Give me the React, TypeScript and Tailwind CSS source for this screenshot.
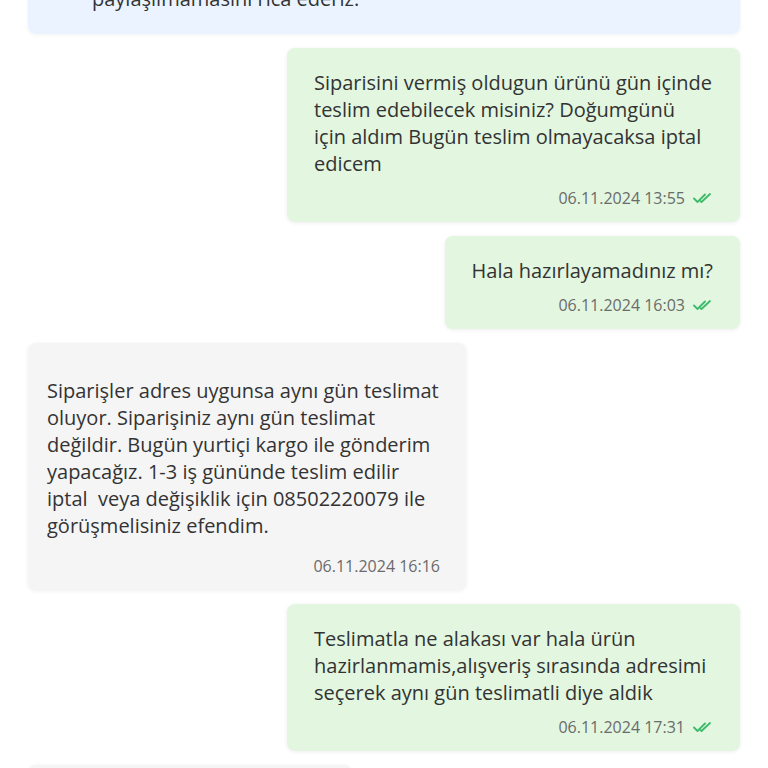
const FONT = { fontFamily: '"Open Sans", "Noto Sans", sans-serif' };

type Msg = {
  from: 'me' | 'them';
  lines: string[];
  time: string;
  width?: string;
};

const MESSAGES: Msg[] = [
  {
    from: 'me',
    width: 'w-[453px]',
    lines: [
      'Siparisini vermiş oldugun ürünü gün içinde',
      'teslim edebilecek misiniz? Doğumgünü',
      'için aldım Bugün teslim olmayacaksa iptal',
      'edicem',
    ],
    time: '06.11.2024 13:55',
  },
  {
    from: 'me',
    lines: ['Hala hazırlayamadınız mı?'],
    time: '06.11.2024 16:03',
  },
  {
    from: 'them',
    width: 'w-[438px]',
    lines: [
      'Siparişler adres uygunsa aynı gün teslimat',
      'oluyor. Siparişiniz aynı gün teslimat',
      'değildir. Bugün yurtiçi kargo ile gönderim',
      'yapacağız. 1-3 iş gününde teslim edilir',
      'iptal\u00a0 veya değişiklik için 08502220079 ile',
      'görüşmelisiniz efendim.',
    ],
    time: '06.11.2024 16:16',
  },
  {
    from: 'me',
    width: 'w-[453px]',
    lines: [
      'Teslimatla ne alakası var hala ürün',
      'hazirlanmamis,alışveriş sırasında adresimi',
      'seçerek aynı gün teslimatli diye aldik',
    ],
    time: '06.11.2024 17:31',
  },
];

function DoubleCheck() {
  return (
    <svg width="20" height="12" viewBox="0 0 20 12" fill="none" className="ml-[8px]">
      <path d="M1 6.5 L4.5 10 L12 2.5" stroke="#3dbb6a" strokeWidth="1.8" strokeLinecap="round" strokeLinejoin="round" />
      <path d="M7.5 9.2 L8.5 10 L17 2" stroke="#3dbb6a" strokeWidth="1.8" strokeLinecap="round" strokeLinejoin="round" />
    </svg>
  );
}

function Bubble({ msg }: { msg: Msg }) {
  const mine = msg.from === 'me';
  return (
    <div className={mine ? 'flex justify-end' : 'flex justify-start'}>
      <div
        className={`${msg.width ?? ''} rounded-[8px] pb-[13px] shadow-[0_1px_4px_rgba(0,0,0,0.07)] ${
          mine ? 'bg-[#e2f6e0] px-[27px] pt-[21px]' : 'bg-[#f5f5f5] px-[19px] pt-[34px]'
        }`}
      >
        <div className="text-[20px] leading-[27px] text-[#333333] whitespace-nowrap">
          {msg.lines.map((line) => (
            <div key={line}>{line}</div>
          ))}
        </div>
        <div
          className={`flex items-center justify-end text-[16px] leading-[22px] text-[#6b6b6b] ${
            mine ? 'mt-[10px]' : 'mt-[16px] pr-[7px]'
          }`}
        >
          <span>{msg.time}</span>
          {mine && <DoubleCheck />}
        </div>
      </div>
    </div>
  );
}

export default function App() {
  return (
    <div className="h-[768px] w-[768px] overflow-hidden bg-white" style={FONT}>
      <div className="flex flex-col gap-[14px] px-[28px]">
        <div className="-mt-[35px] rounded-[8px] bg-[#eaf3ff] pt-[20px] pb-[22px] pl-[64px] text-[20px] leading-[27px] text-[#333333] shadow-[0_1px_4px_rgba(0,0,0,0.05)]">
          paylaşılmamasını rica ederiz.
        </div>
        {MESSAGES.map((m) => (
          <Bubble key={m.time} msg={m} />
        ))}
        <div className="flex justify-start">
          <div className="h-[60px] w-[324px] rounded-[8px] bg-[#f5f5f5] shadow-[0_1px_4px_rgba(0,0,0,0.07)]" />
        </div>
      </div>
    </div>
  );
}
